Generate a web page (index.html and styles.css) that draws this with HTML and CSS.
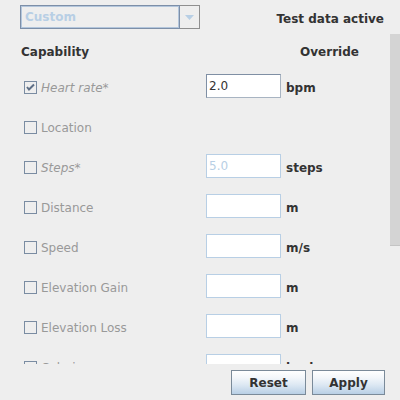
FILE: index.html
```html
<!DOCTYPE html>
<html>
<head>
<meta charset="utf-8">
<link rel="stylesheet" href="styles.css">
</head>
<body>
<div class="app">
  <div class="top">
    <div class="combo">
      <div class="combo-field">Custom</div>
      <div class="combo-btn"><svg width="9" height="5" viewBox="0 0 9 5"><path d="M0 0H9L4.5 5Z" fill="#b8cfe5"/></svg></div>
    </div>
    <div class="status">Test data active</div>
  </div>
  <div class="scroll">
    <div class="content">
      <div class="header">
        <div class="h-cap">Capability</div>
        <div class="h-ovr">Override</div>
      </div>
      <div class="row">
        <div class="cb checked"><svg width="11" height="11" viewBox="0 0 11 11"><path d="M2 5L4 7.5L9 2.5" stroke="#5e6f86" stroke-width="2" fill="none"/></svg></div>
        <div class="label italic">Heart rate*</div>
        <div class="field active">2.0</div>
        <div class="unit">bpm</div>
      </div>
      <div class="row">
        <div class="cb"></div>
        <div class="label">Location</div>
      </div>
      <div class="row">
        <div class="cb"></div>
        <div class="label italic">Steps*</div>
        <div class="field">5.0</div>
        <div class="unit">steps</div>
      </div>
      <div class="row">
        <div class="cb"></div>
        <div class="label">Distance</div>
        <div class="field"></div>
        <div class="unit">m</div>
      </div>
      <div class="row">
        <div class="cb"></div>
        <div class="label">Speed</div>
        <div class="field"></div>
        <div class="unit">m/s</div>
      </div>
      <div class="row">
        <div class="cb"></div>
        <div class="label">Elevation Gain</div>
        <div class="field"></div>
        <div class="unit">m</div>
      </div>
      <div class="row">
        <div class="cb"></div>
        <div class="label">Elevation Loss</div>
        <div class="field"></div>
        <div class="unit">m</div>
      </div>
      <div class="row">
        <div class="cb"></div>
        <div class="label">Calories</div>
        <div class="field"></div>
        <div class="unit">kcal</div>
      </div>
      <div class="row">
        <div class="cb"></div>
        <div class="label">Floors</div>
        <div class="field"></div>
        <div class="unit">floors</div>
      </div>
    </div>
    <div class="sbar"><div class="thumb"></div></div>
  </div>
  <div class="bottom">
    <button class="btn reset">Reset</button>
    <button class="btn apply">Apply</button>
  </div>
</div>
</body>
</html>
```
FILE: styles.css
```css
html, body {
  margin: 0;
  padding: 0;
  background: #eeeeee;
}
body {
  width: 400px;
  height: 400px;
  overflow: hidden;
  font-family: "DejaVu Sans", sans-serif;
  font-size: 12px;
  color: #333333;
}
.app {
  display: flex;
  flex-direction: column;
  width: 400px;
  height: 400px;
}
.top {
  height: 34px;
  box-sizing: border-box;
  padding: 5px 16px 0 20px;
  display: flex;
  align-items: flex-start;
  justify-content: space-between;
}
.combo {
  display: flex;
  width: 180px;
  height: 24px;
}
.combo-field {
  width: 160px;
  height: 24px;
  box-sizing: border-box;
  border: 1px solid #7d8fa8;
  box-shadow: inset 0 0 0 1px #b3c6dc;
  padding-left: 4px;
  line-height: 23px;
  font-weight: bold;
  color: #b8cfe5;
}
.combo-btn {
  width: 20px;
  height: 24px;
  box-sizing: border-box;
  border: 1px solid #8f8f8f;
  border-left: none;
  display: flex;
  align-items: center;
  justify-content: center;
}
.status {
  font-weight: bold;
  line-height: 24px;
  margin-top: 2px;
}
.scroll {
  height: 330px;
  display: flex;
  overflow: hidden;
}
.content {
  width: 390px;
}
.sbar {
  width: 10px;
}
.thumb {
  height: 212px;
  background: #d4d4d4;
  border-bottom: 1px solid #c4c4c4;
  box-sizing: border-box;
}
.header {
  height: 32px;
  box-sizing: border-box;
  padding-top: 3px;
  display: flex;
  align-items: center;
  font-weight: bold;
}
.h-cap {
  margin-left: 21px;
}
.h-ovr {
  margin-left: 211px;
}
.row {
  height: 40px;
  display: flex;
  align-items: center;
}
.cb {
  width: 13px;
  height: 13px;
  box-sizing: border-box;
  border: 1px solid #7a8ca2;
  margin-left: 24px;
  margin-top: 2px;
  display: flex;
  align-items: center;
  justify-content: center;
}
.label {
  margin-left: 4px;
  width: 165px;
  padding-top: 3px;
  color: #999999;
}
.italic {
  font-style: italic;
}
.field {
  width: 75px;
  height: 24px;
  box-sizing: border-box;
  border: 1px solid #b8cfe5;
  background: #ffffff;
  padding-left: 2px;
  line-height: 23px;
  color: #b8cfe5;
}
.field.active {
  border-color: #7f8fa4;
  border-right-color: #a8b4c2;
  border-bottom-color: #a8b4c2;
  color: #333333;
}
.unit {
  margin-left: 5px;
  padding-top: 3px;
  font-weight: bold;
}
.bottom {
  height: 36px;
  display: flex;
  justify-content: flex-end;
  gap: 6px;
  padding: 6px 15px 0 0;
  box-sizing: border-box;
}
.btn {
  height: 25px;
  margin: 0;
  padding: 1px 0 0;
  border: 1px solid #7a8a99;
  background: linear-gradient(#ffffff 0%, #f2f6fa 30%, #dde8f3 60%, #b8cfe5 100%);
  font-family: "DejaVu Sans", sans-serif;
  font-size: 12px;
  font-weight: bold;
  color: #333333;
}
.reset { width: 75px; }
.apply { width: 73px; }
```
